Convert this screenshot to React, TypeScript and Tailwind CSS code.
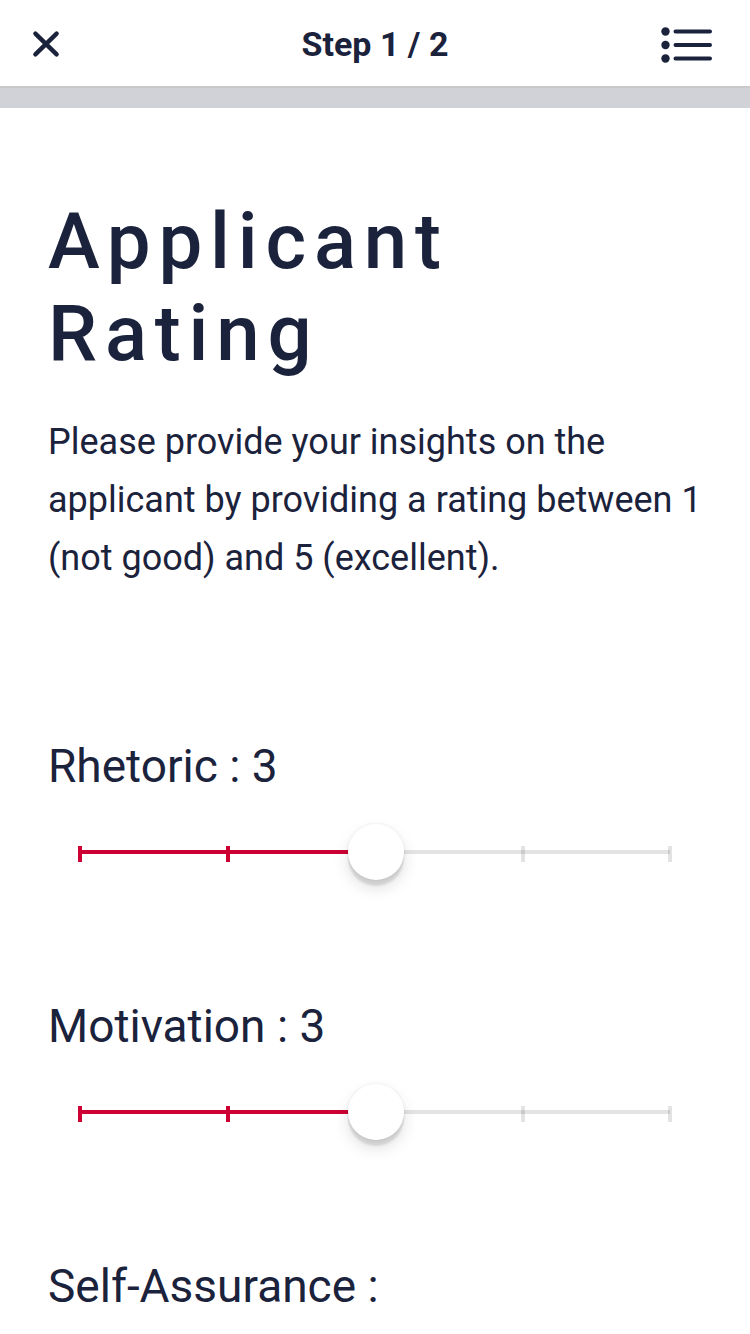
import { useState } from "react";

const STEPS = [1, 2, 3, 4, 5];

function RatingSlider({ id, label }: { id: string; label: string }) {
  const [value, setValue] = useState(3);
  const filled = ((value - 1) / (STEPS.length - 1)) * 100;

  return (
    <div>
      <label htmlFor={id} className="block text-[46px] leading-14">
        {label} : {value}
      </label>
      <div className="mt-[30px] grid h-14 items-center">
        <div className="col-start-1 row-start-1 mx-8 h-1 bg-black/11">
          <div className="h-full bg-[#cc0033]" style={{ width: `${filled}%` }} />
        </div>
        <div className="col-start-1 row-start-1 mx-[30px] flex justify-between pt-1" aria-hidden="true">
          {STEPS.map((step) => (
            <span
              key={step}
              className={step <= value ? "h-4 w-1 bg-[#cc0033]" : "h-4 w-1 bg-black/11"}
            />
          ))}
        </div>
        <input
          id={id}
          type="range"
          min={1}
          max={5}
          step={1}
          value={value}
          onChange={(event) => setValue(Number(event.target.value))}
          className="z-10 col-start-1 row-start-1 mr-[3px] ml-[5px] h-14 cursor-pointer appearance-none bg-transparent [&::-webkit-slider-thumb]:size-14 [&::-webkit-slider-thumb]:appearance-none [&::-webkit-slider-thumb]:rounded-full [&::-webkit-slider-thumb]:bg-white [&::-webkit-slider-thumb]:shadow-[0_6px_2px_rgba(0,0,0,0.1),0_8px_16px_rgba(0,0,0,0.13),0_0_0_2px_rgba(0,0,0,0.02)] [&::-moz-range-thumb]:size-14 [&::-moz-range-thumb]:rounded-full [&::-moz-range-thumb]:border-0 [&::-moz-range-thumb]:bg-white"
        />
      </div>
    </div>
  );
}

export default function App() {
  return (
    <div className="bg-white font-[Roboto,sans-serif] text-[#1b223c]">
      <header className="grid h-22 grid-cols-3 items-center border-b-2 border-[#c9c9cc] px-8 pt-0.5">
        <button type="button" aria-label="Close" className="justify-self-start">
          <svg className="size-7" viewBox="0 0 28 28" fill="none" stroke="currentColor" strokeWidth="4.4" strokeLinecap="round">
            <path d="M3.4 3.6 24.6 24.4M24.6 3.6 3.4 24.4" />
          </svg>
        </button>
        <h1 className="text-center text-[34px] leading-10 font-bold">Step 1 / 2</h1>
        <button type="button" aria-label="Menu" className="justify-self-end pr-1">
          <svg className="h-10 w-14" viewBox="0 0 56 40" fill="none" stroke="currentColor" strokeWidth="4" strokeLinecap="round">
            <path d="M17.5 7.5H52M17.5 21H52M17.5 34.5H52" />
            <g fill="currentColor" stroke="none">
              <circle cx="7.5" cy="7.5" r="4.2" />
              <circle cx="7.5" cy="21" r="4.2" />
              <circle cx="7.5" cy="34.5" r="4.2" />
            </g>
          </svg>
        </button>
      </header>
      <div className="h-5 bg-[#d1d2d7]" />
      <main className="px-12 pt-22">
        <h2 className="text-[78px] leading-[92px] font-medium tracking-widest">Applicant Rating</h2>
        <p className="mt-[33px] text-[36px] leading-[58px]">
          Please provide your insights on the applicant by providing a rating between 1 (not good) and 5
          (excellent).
        </p>
        <form className="mt-[151px] flex flex-col gap-[118px]">
          <RatingSlider id="rhetoric" label="Rhetoric" />
          <RatingSlider id="motivation" label="Motivation" />
          <p className="text-[46px] leading-14">Self-Assurance :</p>
        </form>
      </main>
    </div>
  );
}
